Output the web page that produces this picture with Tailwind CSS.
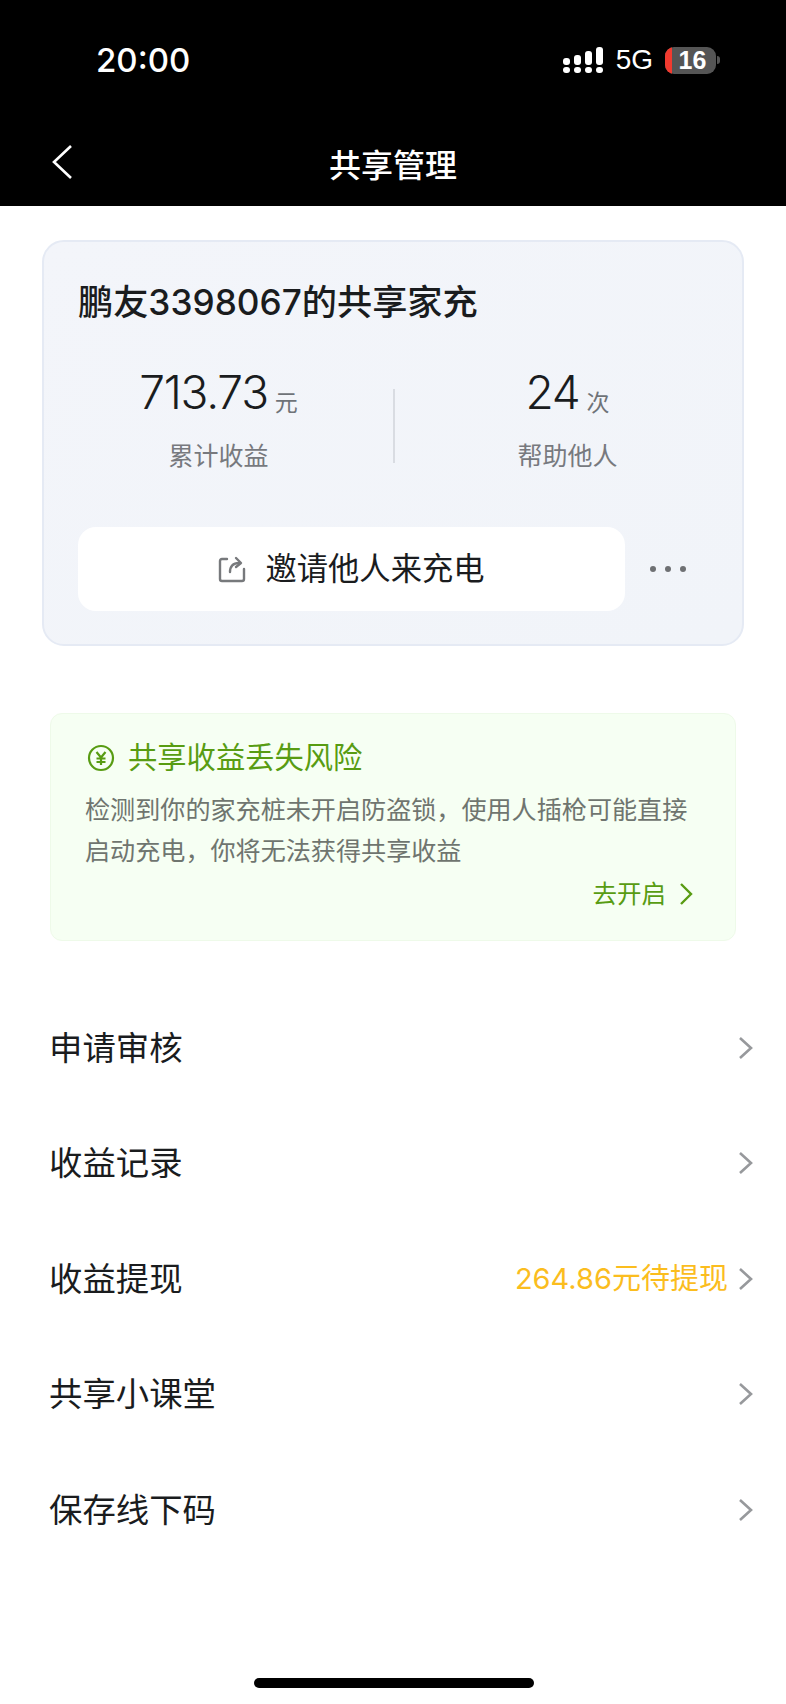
<!DOCTYPE html>
<html lang="zh">

<head>
  <meta charset="UTF-8">
  <meta name="viewport" content="width=device-width, initial-scale=1">
  <title>共享管理</title>
  <script src="https://cdn.jsdelivr.net/npm/@tailwindcss/browser@4"></script>
</head>

<body class="relative w-[786px] h-[1704px] overflow-hidden bg-white font-['Inter','Noto_Sans_CJK_SC',sans-serif] text-[#1a1c1e]">
  <!-- top bar -->
  <header class="h-[206px] bg-black text-white flex flex-col">
    <div class="h-[120px] flex items-center pl-[96px] pr-[66px]">
      <span class="text-[33px] font-medium leading-none">20:00</span>
      <div class="ml-auto flex items-center">
        <svg width="40" height="26" viewBox="0 0 40 26" fill="#fff">
          <rect x="0" y="11" width="7" height="7" rx="3"/><rect x="0" y="20" width="7" height="6" rx="3"/>
          <rect x="11" y="8" width="7" height="10" rx="3"/><rect x="11" y="20" width="7" height="6" rx="3"/>
          <rect x="22" y="4" width="7" height="14" rx="3"/><rect x="22" y="20" width="7" height="6" rx="3"/>
          <rect x="33" y="0" width="7" height="18" rx="3"/><rect x="33" y="20" width="7" height="6" rx="3"/>
        </svg>
        <span class="ml-[13px] text-[28px] leading-none font-['Liberation_Sans',sans-serif]">5G</span>
        <div class="ml-[12px] relative w-[51px] h-[27px] rounded-[9px] bg-[#555] overflow-hidden flex items-center justify-center pl-[4px]">
          <div class="absolute left-0 top-0 bottom-0 w-[7px] bg-[#f23a2f]"></div>
          <span class="text-[25px] font-bold leading-none font-['Liberation_Sans',sans-serif]">16</span>
        </div>
        <div class="ml-[1px] w-[3px] h-[8px] bg-[#555] rounded-r-full"></div>
      </div>
    </div>
    <div class="relative flex-1 flex items-start justify-center pt-[22px]">
      <svg class="absolute left-[50px] top-[24px]" width="24" height="36" viewBox="0 0 24 36" fill="none" stroke="#fff" stroke-width="2.6">
        <path d="M21 2 L4 18 L21 34"/>
      </svg>
      <h1 class="text-[32px] font-medium leading-[48px]">共享管理</h1>
    </div>
  </header>

  <main class="px-[42px] pt-[34px]">
    <!-- share card -->
    <section class="h-[406px] rounded-[22px] border-2 border-[#e5eaf4] bg-gradient-to-br from-[#f3f5fa] to-[#f1f4f9] px-[34px] pt-[35px]">
      <h2 class="text-[35.2px] font-medium leading-[50px] whitespace-nowrap">鹏友3398067的共享家充</h2>
      <div class="mt-[35px] flex items-center">
        <div class="flex-1 text-center pr-[34px]">
          <div class="flex items-baseline justify-center gap-[7px] leading-[60px]">
            <span class="text-[46px] font-light tracking-[-1.2px]">713.73</span><span class="translate-y-[2px] text-[23px] text-[#6f7378]">元</span>
          </div>
          <div class="mt-[7px] text-[25px] leading-[36px] text-[#77797e]">累计收益</div>
        </div>
        <div class="mt-[16px] w-[2px] h-[74px] bg-[#d9dce2]"></div>
        <div class="flex-1 text-center pl-[32px]">
          <div class="flex items-baseline justify-center gap-[7px] leading-[60px]">
            <span class="text-[46px] font-light tracking-[-1.2px]">24</span><span class="translate-y-[2px] text-[23px] text-[#6f7378]">次</span>
          </div>
          <div class="mt-[7px] text-[25px] leading-[36px] text-[#77797e]">帮助他人</div>
        </div>
      </div>
      <div class="mt-[53px] flex items-center">
        <div class="w-[547px] h-[84px] rounded-[18px] bg-white flex items-center justify-center gap-[19px]">
          <svg width="28" height="28" viewBox="0 0 28 28" fill="none" stroke="#77797c" stroke-width="2.4" stroke-linecap="round" stroke-linejoin="round">
            <path d="M9 4 H4 Q2 4 2 6 V24 Q2 26 4 26 H24 Q26 26 26 24 V14"/>
            <path d="M12 17 Q12 8 21 8"/>
            <path d="M18 3 L23 8 L18 12"/>
          </svg>
          <span class="text-[31.3px] leading-none pt-[2px]">邀请他人来充电</span>
        </div>
        <div class="ml-[25px] flex gap-[9px]">
          <span class="w-[6px] h-[6px] rounded-full bg-[#6e7073]"></span>
          <span class="w-[6px] h-[6px] rounded-full bg-[#6e7073]"></span>
          <span class="w-[6px] h-[6px] rounded-full bg-[#6e7073]"></span>
        </div>
      </div>
    </section>

    <!-- risk notice -->
    <section class="mx-[8px] mt-[67px] h-[228px] rounded-[12px] border border-[#eefae9] bg-[#f6fff3] pl-[34px] pr-[42px] pt-[22px]">
      <div class="flex items-center gap-[13px] pl-[2px] text-[#589c12]">
        <svg width="28" height="28" viewBox="0 0 28 28" fill="none" stroke="#589c12" stroke-width="2.2">
          <circle cx="14" cy="14" r="12"/>
          <path d="M9.5 8 L14 13.5 L18.5 8 M14 13.5 V21 M9.5 14.5 H18.5 M9.5 18 H18.5"/>
        </svg>
        <span class="text-[29.3px] leading-[44px]">共享收益丢失风险</span>
      </div>
      <p class="mt-[10px] text-[25.1px] leading-[41px] text-[#6f756f] whitespace-nowrap">检测到你的家充桩未开启防盗锁，使用人插枪可能直接<br>启动充电，你将无法获得共享收益</p>
      <div class="mt-[4px] flex items-center justify-end gap-[13px] text-[#589c12]">
        <span class="text-[24.5px] leading-[36px]">去开启</span>
        <svg width="14" height="24" viewBox="0 0 14 24" fill="none" stroke="#589c12" stroke-width="2.4"><path d="M2 2 L12 12 L2 22"/></svg>
      </div>
    </section>

    <!-- menu -->
    <ul class="-mx-[42px] mt-[49px] pl-[49px] pr-[33px]">
      <li class="h-[115.5px] flex items-center text-[33.4px]">
        <span>申请审核</span>
        <svg class="ml-auto" width="15" height="24" viewBox="0 0 15 24" fill="none" stroke="#97999c" stroke-width="2.6"><path d="M2 2 L13 12 L2 22"/></svg>
      </li>
      <li class="h-[115.5px] flex items-center text-[33.4px]">
        <span>收益记录</span>
        <svg class="ml-auto" width="15" height="24" viewBox="0 0 15 24" fill="none" stroke="#97999c" stroke-width="2.6"><path d="M2 2 L13 12 L2 22"/></svg>
      </li>
      <li class="h-[115.5px] flex items-center text-[33.4px]">
        <span>收益提现</span>
        <span class="ml-auto mr-[10px] text-[29px] text-[#fbbd1e]">264.86元待提现</span>
        <svg width="15" height="24" viewBox="0 0 15 24" fill="none" stroke="#97999c" stroke-width="2.6"><path d="M2 2 L13 12 L2 22"/></svg>
      </li>
      <li class="h-[115.5px] flex items-center text-[33.4px]">
        <span>共享小课堂</span>
        <svg class="ml-auto" width="15" height="24" viewBox="0 0 15 24" fill="none" stroke="#97999c" stroke-width="2.6"><path d="M2 2 L13 12 L2 22"/></svg>
      </li>
      <li class="h-[115.5px] flex items-center text-[33.4px]">
        <span>保存线下码</span>
        <svg class="ml-auto" width="15" height="24" viewBox="0 0 15 24" fill="none" stroke="#97999c" stroke-width="2.6"><path d="M2 2 L13 12 L2 22"/></svg>
      </li>
    </ul>
  </main>

  <!-- home indicator -->
  <div class="absolute left-[254px] top-[1678px] w-[280px] h-[10px] rounded-full bg-black"></div>
</body>

</html>
